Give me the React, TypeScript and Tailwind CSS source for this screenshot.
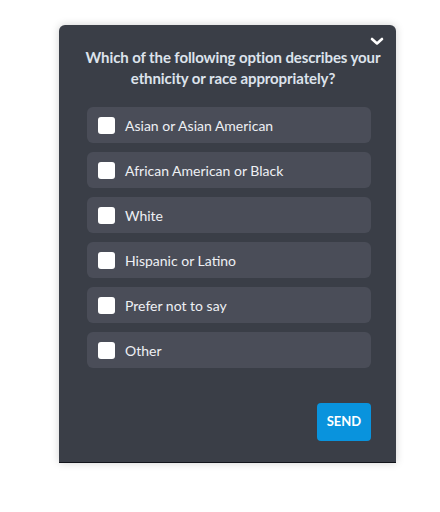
import { useState } from 'react';

const options = [
  'Asian or Asian American',
  'African American or Black',
  'White',
  'Hispanic or Latino',
  'Prefer not to say',
  'Other',
];

const Survey = () => {
  const [checked, setChecked] = useState<string[]>([]);

  const toggle = (o: string) =>
    setChecked((c) => (c.includes(o) ? c.filter((x) => x !== o) : [...c, o]));

  return (
    <div className="min-h-[512px] bg-white pt-[25px] pl-[59px]" style={{ fontFamily: 'Lato, "Open Sans", sans-serif' }}>
      <div className="w-[337px] h-[438px] bg-[#3a3e47] rounded-t-[6px] border-b border-[#11131a] shadow-[0_0_8px_rgba(0,0,0,0.18)] flex flex-col pl-[28px] pr-[25px]">
        <div className="flex justify-end h-[22px] -mr-[13px] pt-[12px]">
          <svg width="14" height="9" viewBox="0 0 14 9" fill="none">
            <path d="M2 2l5 4.5L12 2" stroke="#ffffff" strokeWidth="2.6" strokeLinecap="round" strokeLinejoin="round" />
          </svg>
        </div>
        <h2 className="text-[15px] font-bold text-[#dde3ec] text-center leading-[21px] -ml-[6px] -mr-[14px] tracking-[-0.1px]">
          Which of the following option describes your ethnicity or race appropriately?
        </h2>
        <div className="flex flex-col gap-[9px] mt-[18px]">
          {options.map((o) => (
            <label
              key={o}
              className="h-[36px] bg-[#4a4d58] rounded-[6px] flex items-center pl-[11px] cursor-pointer"
            >
              <input type="checkbox" className="hidden" checked={checked.includes(o)} onChange={() => toggle(o)} />
              <span className="w-[17px] h-[17px] bg-white rounded-[3px] flex items-center justify-center">
                {checked.includes(o) && (
                  <svg width="11" height="9" viewBox="0 0 11 9">
                    <path d="M1 4.5l3 3L10 1" stroke="#0993dd" strokeWidth="2" fill="none" />
                  </svg>
                )}
              </span>
              <span className="ml-[10px] text-[14px] text-[#eef0f4]">{o}</span>
            </label>
          ))}
        </div>
        <div className="flex justify-end mt-[35px]">
          <button className="w-[54px] h-[38px] bg-[#0993dd] rounded-[4px] text-white text-[13px] font-bold">
            SEND
          </button>
        </div>
      </div>
    </div>
  );
};

export default function App() {
  return <Survey />;
}
